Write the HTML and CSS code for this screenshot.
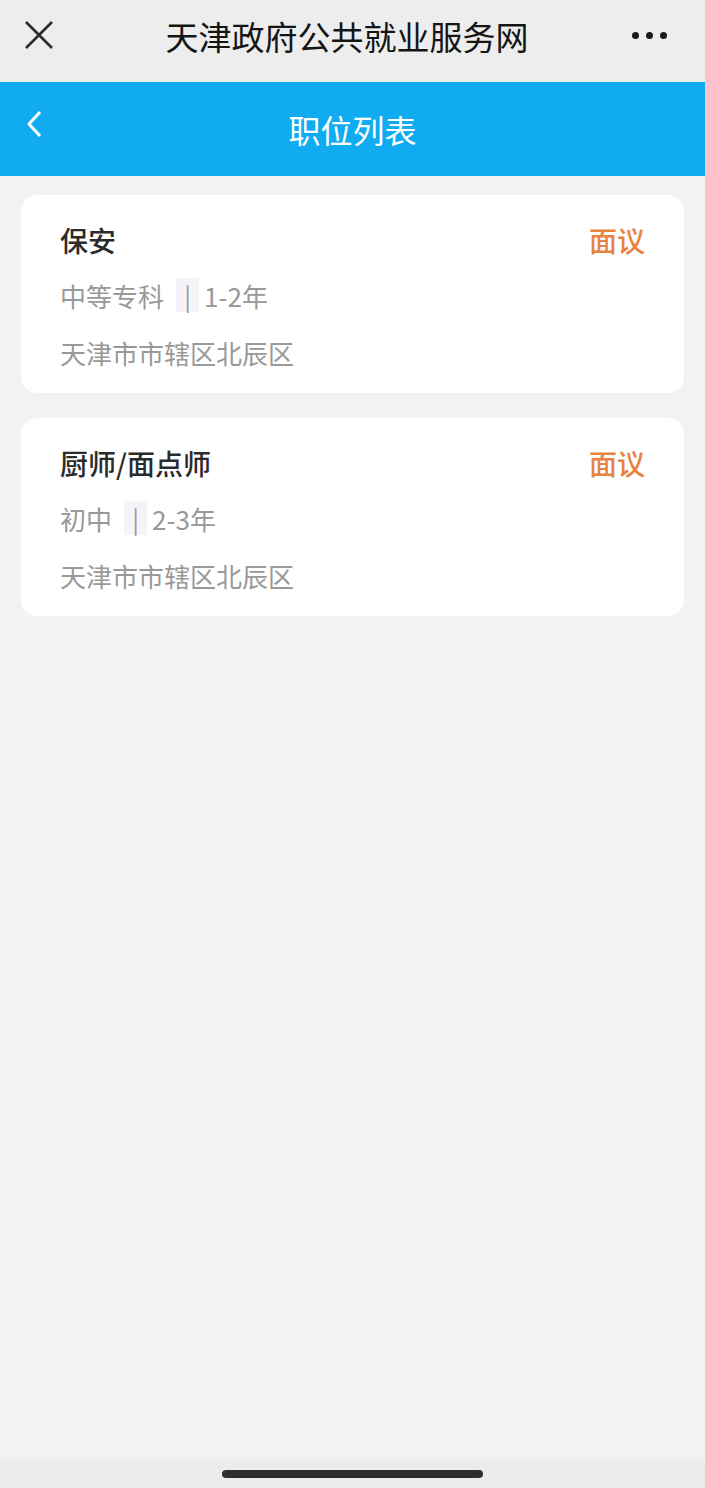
FILE: index.html
```html
<!DOCTYPE html>
<html>
<head>
    <meta charset="utf-8">
    <title>职位列表</title>
    <link rel="stylesheet" href="styles.css">
</head>
<body>
    <div class="topbar">
        <svg class="close-icon" width="30" height="30" viewBox="0 0 30 30">
            <path d="M2 2 L28 28 M28 2 L2 28" stroke="#2b2b2b" stroke-width="2.6" fill="none"/>
        </svg>
        <div class="topbar-title">天津政府公共就业服务网</div>
        <div class="more-icon">
            <span></span><span></span><span></span>
        </div>
    </div>

    <div class="header">
        <svg class="back-icon" width="16" height="28" viewBox="0 0 16 28">
            <path d="M14 2 L3 14 L14 26" stroke="#fff" stroke-width="3" fill="none" stroke-linejoin="round"/>
        </svg>
        <div class="header-title">职位列表</div>
    </div>

    <div class="job-list">
        <div class="job-card">
            <div class="job-top">
                <div class="job-name">保安</div>
                <div class="job-salary">面议</div>
            </div>
            <div class="job-info">中等专科<span class="sep">|</span>1-2年</div>
            <div class="job-info job-area">天津市市辖区北辰区</div>
        </div>

        <div class="job-card">
            <div class="job-top">
                <div class="job-name">厨师/面点师</div>
                <div class="job-salary">面议</div>
            </div>
            <div class="job-info">初中<span class="sep">|</span>2-3年</div>
            <div class="job-info job-area">天津市市辖区北辰区</div>
        </div>
    </div>

    <div class="home-bar">
        <div class="home-indicator"></div>
    </div>
</body>
</html>
```

FILE: styles.css
```css
body {
    margin: 0;
    background-color: #f2f2f2;
    font-family: "Noto Sans CJK SC", "Noto Sans", sans-serif;
    height: 1488px;
    display: flex;
    flex-direction: column;
}
.topbar {
    height: 82px;
    background-color: #ededed;
    display: flex;
    align-items: center;
    padding: 0 38px 0 24px;
}
.close-icon {
    flex: none;
    margin-top: -12px;
}
.topbar-title {
    flex: 1;
    text-align: center;
    font-size: 33px;
    color: #151515;
    font-weight: 400;
    margin-top: -10px;
    padding-left: 8px;
}
.more-icon {
    display: flex;
    gap: 7px;
    margin-top: -12px;
}
.more-icon span {
    width: 7px;
    height: 7px;
    border-radius: 50%;
    background-color: #1a1a1a;
}
.header {
    height: 94px;
    background-color: #10abf1;
    display: flex;
    align-items: center;
    padding-left: 26px;
    position: relative;
}
.back-icon {
    margin-top: -10px;
}
.header-title {
    position: absolute;
    left: 0;
    right: 0;
    text-align: center;
    color: #fff;
    font-size: 32px;
}
.job-list {
    flex: 1;
    padding: 19px 21px 0;
    display: flex;
    flex-direction: column;
    gap: 25px;
}
.job-card {
    background-color: #fff;
    border-radius: 16px;
    padding: 27px 39px 22px;
}
.job-top {
    display: flex;
    justify-content: space-between;
    align-items: center;
    height: 36px;
}
.job-name {
    font-size: 28px;
    color: #2b2b2b;
    font-weight: 500;
}
.job-salary {
    font-size: 28px;
    color: #e8823f;
    font-weight: 500;
}
.job-info {
    margin-top: 20px;
    height: 36px;
    line-height: 36px;
    font-size: 26px;
    color: #999;
}
.job-area {
    margin-top: 21px;
}
.sep {
    display: inline-block;
    width: 23px;
    text-align: center;
    background-color: #f4f4f8;
    line-height: 34px;
    margin: 0 5px 0 12px;
    color: #999;
    font-size: 25px;
    vertical-align: top;
}
.home-bar {
    height: 28px;
    background-color: #ececec;
    display: flex;
    justify-content: center;
    padding-top: 10px;
    box-sizing: border-box;
}
.home-indicator {
    width: 261px;
    height: 8px;
    border-radius: 4px;
    background-color: #2e2e2e;
}
```
